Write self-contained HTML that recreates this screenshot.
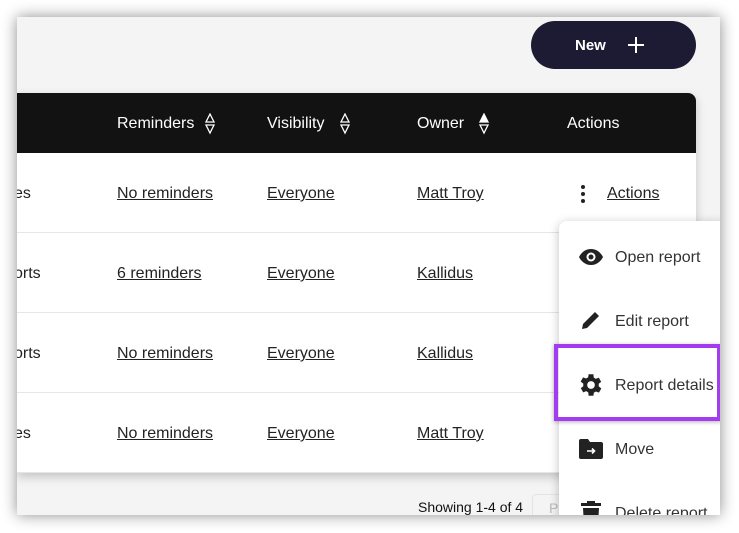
<!DOCTYPE html>
<html><head><style>
*{margin:0;padding:0;box-sizing:border-box}
body{width:739px;height:533px;background:#fff;position:relative;overflow:hidden;font-family:"Liberation Sans",sans-serif;color:#222}
#frame{position:absolute;left:17px;top:17px;width:703px;height:498px;background:#f4f4f4;overflow:hidden;box-shadow:0 0 14px rgba(0,0,0,.45)}
.btn{position:absolute;left:514px;top:4px;width:165px;height:48px;border-radius:24px;background:#1c1b33;color:#fff;font-weight:bold;font-size:15px}
.btn span{position:absolute;left:44px;top:16px}
.tbl{position:absolute;left:0;top:76px;width:679px;height:380px;background:#fff;box-shadow:0 4px 10px rgba(0,0,0,.2);border-top-right-radius:8px}
.hd{position:absolute;left:0;top:0;width:679px;height:60px;background:#121212;border-top-right-radius:8px;color:#fff;font-size:16px}
.hd div{position:absolute;top:22px}
.row{position:absolute;left:0;width:679px;height:80px;border-bottom:1px solid #e6e6e6;font-size:16px}
.row div{position:absolute;top:32px}
.u{text-decoration:underline}
.menu{position:absolute;left:542px;top:204px;width:170px;height:310px;background:#fff;border-radius:8px;box-shadow:0 2px 10px rgba(0,0,0,.25);font-size:16px;color:#333}
.mi{position:absolute;left:56px}
.ic{position:absolute;left:20px}
.hl{position:absolute;left:537px;top:327px;width:167px;height:77px;border:4px solid #a33cf0;box-shadow:0 1px 4px rgba(0,0,0,.3)}
</style></head><body>
<div id="frame">
<div class="btn"><span>New</span><svg style="position:absolute;left:96px;top:15px" width="18" height="18"><path d="M9 1V17M1 9H17" stroke="#fff" stroke-width="2"/></svg></div>
<div class="tbl">
<div class="hd">
<div style="left:100px">Reminders</div><svg style="position:absolute;left:188px;top:20px" width="10" height="22"><path d="M5 1L9 9H1Z M1 12H9L5 20Z" fill="none" stroke="#fff" stroke-width="1.3"/></svg>
<div style="left:250px">Visibility</div><svg style="position:absolute;left:323px;top:20px" width="10" height="22"><path d="M5 1L9 9H1Z M1 12H9L5 20Z" fill="none" stroke="#fff" stroke-width="1.3"/></svg>
<div style="left:400px">Owner</div><svg style="position:absolute;left:462px;top:20px" width="10" height="22"><path d="M5 1L9 9H1Z" fill="#fff" stroke="#fff" stroke-width="1.3"/><path d="M1 12H9L5 20Z" fill="none" stroke="#fff" stroke-width="1.3"/></svg>
<div style="left:550px">Actions</div>
</div>
<div class="row" style="top:60px"><div style="left:-3px">es</div><div class="u" style="left:100px">No reminders</div><div class="u" style="left:250px">Everyone</div><div class="u" style="left:400px">Matt Troy</div>
<svg style="position:absolute;left:563px;top:31px" width="6" height="20"><circle cx="3" cy="3" r="2" fill="#222"/><circle cx="3" cy="10" r="2" fill="#222"/><circle cx="3" cy="17" r="2" fill="#222"/></svg><div class="u" style="left:590px">Actions</div></div>
<div class="row" style="top:140px"><div style="left:-3px">orts</div><div class="u" style="left:100px">6 reminders</div><div class="u" style="left:250px">Everyone</div><div class="u" style="left:400px">Kallidus</div></div>
<div class="row" style="top:220px"><div style="left:-3px">orts</div><div class="u" style="left:100px">No reminders</div><div class="u" style="left:250px">Everyone</div><div class="u" style="left:400px">Kallidus</div></div>
<div class="row" style="top:300px"><div style="left:-3px">es</div><div class="u" style="left:100px">No reminders</div><div class="u" style="left:250px">Everyone</div><div class="u" style="left:400px">Matt Troy</div></div>
</div>
<div style="position:absolute;left:401px;top:482px;font-size:14px;color:#111">Showing 1-4 of 4</div>
<div style="position:absolute;left:515px;top:477px;width:40px;height:30px;border:1px solid #e4e4e4;border-radius:4px;color:#bbb;font-size:14px;padding:5px 0 0 16px">Pr</div>
<div class="menu">
<svg class="ic" style="top:28px" width="24" height="16" viewBox="0 0 24 16"><path d="M12 0C6 0 2 4 0 8c2 4 6 8 12 8s10-4 12-8C22 4 18 0 12 0z" fill="#222"/><circle cx="12" cy="8" r="4.5" fill="#fff"/><circle cx="12" cy="8" r="2.5" fill="#222"/></svg>
<div class="mi" style="top:28px">Open report</div>
<svg class="ic" style="top:89px;left:22px" width="20" height="20" viewBox="0 0 20 20"><path d="M1 19l1-5L14 2l4 4L6 18z" fill="#222"/></svg>
<div class="mi" style="top:92px">Edit report</div>
<svg class="ic" style="top:152px;left:20px" width="24" height="24" viewBox="3 2 20 20"><path d="M19.4 13a7.6 7.6 0 000-2l2.1-1.6-2-3.5-2.5 1a7 7 0 00-1.7-1L15 3h-4l-.4 2.6a7 7 0 00-1.7 1l-2.5-1-2 3.5L6.6 11a7.6 7.6 0 000 2l-2.1 1.6 2 3.5 2.5-1a7 7 0 001.7 1L11 21h4l.4-2.6a7 7 0 001.7-1l2.5 1 2-3.5z" fill="#222"/><circle cx="13" cy="12" r="3.2" fill="#fff"/></svg>
<div class="mi" style="top:156px">Report details</div>
<svg class="ic" style="top:218px" width="24" height="20" viewBox="0 0 24 20"><path d="M0 2a2 2 0 012-2h7l2 3h11a2 2 0 012 2v13a2 2 0 01-2 2H2a2 2 0 01-2-2z" fill="#222"/><path d="M8 12h7M13 9.5l2.5 2.5-2.5 2.5" stroke="#fff" stroke-width="1.6" fill="none"/></svg>
<div class="mi" style="top:220px">Move</div>
<svg class="ic" style="top:280px;left:22px" width="20" height="24" viewBox="0 0 20 24"><path d="M6 0h8v2h6v3H0V2h6zM2 7h16l-1 17H3z" fill="#222"/></svg>
<div class="mi" style="top:284px">Delete report</div>
</div>
<div class="hl"></div>
</div>
</body></html>
